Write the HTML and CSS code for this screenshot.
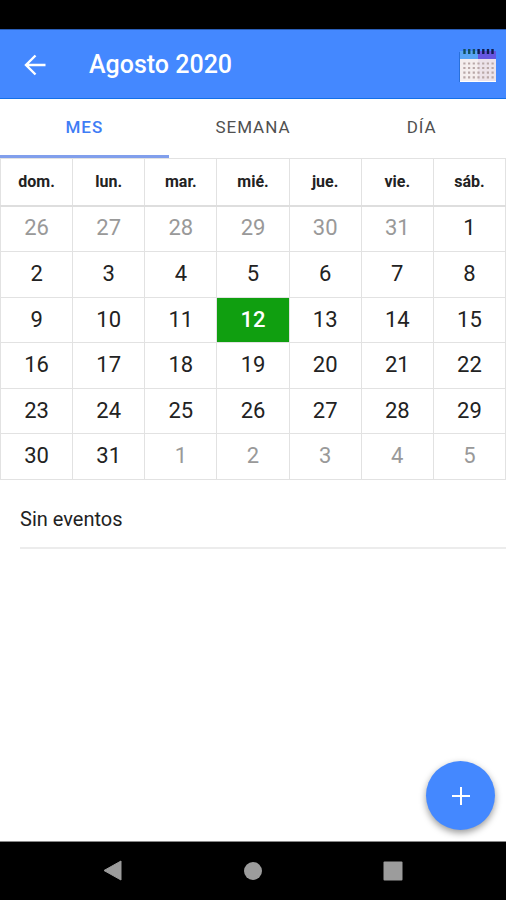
FILE: index.html
```html
<!DOCTYPE html>
<html lang="es">
<head>
<meta charset="utf-8">
<meta name="viewport" content="width=device-width, initial-scale=1">
<title>Agosto 2020</title>
<link rel="stylesheet" href="styles.css">
</head>
<body>
<div class="status-bar"></div>
<header class="app-bar">
  <button class="icon-button" type="button" aria-label="Volver">
    <svg width="22" height="22" viewBox="0 0 22 22" fill="none" stroke="currentColor" stroke-width="2.4"><path d="M21.5 11H2.5M11.500 1.500L2 11l9.500 9.500"/></svg>
  </button>
  <h1 class="title">Agosto 2020</h1>
  <button class="icon-button" type="button" aria-label="Hoy">
    <svg width="38" height="36" viewBox="0 0 38 36">
      <path fill="#2870dc" d="M0 5h2v30H0z"/>
      <path fill="#58a5f5" d="M1 4h18v9H1z"/>
      <path fill="#6656e0" d="M19 4h18v9H19z"/>
      <path fill="#f5eeee" d="M1 12h18v23H1z"/>
      <path fill="#ece2e9" d="M19 12h18v23H19z"/>
      <path fill="#fff" d="M1 34h36v1H1z"/>
      <path stroke="#12515f" stroke-width="2.400" d="M5.500 2v5M10.200 2v5M14.900 2v5"/>
      <path stroke="#101c50" stroke-width="2.400" d="M19.600 2v5M24.300 2v5M29 2v5M33.500 2v5"/>
      <path stroke="#b9a8a8" stroke-width="2.200" stroke-dasharray="2.200 2.500" d="M4.300 16.500h31M4.300 21h31M4.300 25.700h31M4.300 30.300h31"/>
    </svg>
  </button>
</header>
<nav class="tabs">
  <button class="tab tab-active" type="button">MES</button>
  <button class="tab" type="button">SEMANA</button>
  <button class="tab" type="button">DÍA</button>
</nav>
<main class="content">
  <table class="calendar">
    <thead>
      <tr><th>dom.</th><th>lun.</th><th>mar.</th><th>mié.</th><th>jue.</th><th>vie.</th><th>sáb.</th></tr>
    </thead>
    <tbody>
      <tr><td class="other">26</td><td class="other">27</td><td class="other">28</td><td class="other">29</td><td class="other">30</td><td class="other">31</td><td>1</td></tr>
      <tr><td>2</td><td>3</td><td>4</td><td>5</td><td>6</td><td>7</td><td>8</td></tr>
      <tr><td>9</td><td>10</td><td>11</td><td class="selected">12</td><td>13</td><td>14</td><td>15</td></tr>
      <tr><td>16</td><td>17</td><td>18</td><td>19</td><td>20</td><td>21</td><td>22</td></tr>
      <tr><td>23</td><td>24</td><td>25</td><td>26</td><td>27</td><td>28</td><td>29</td></tr>
      <tr><td>30</td><td>31</td><td class="other">1</td><td class="other">2</td><td class="other">3</td><td class="other">4</td><td class="other">5</td></tr>
    </tbody>
  </table>
  <p class="events">Sin eventos</p>
  <button class="fab" type="button" aria-label="Añadir evento">
    <svg width="20" height="20" viewBox="0 0 20 20" stroke="currentColor" stroke-width="2"><path d="M10 1v18M1 10h18"/></svg>
  </button>
</main>
<footer class="nav-bar">
  <button class="nav-button" type="button" aria-label="Atrás"><svg width="20" height="22" viewBox="0 0 20 22"><path fill="currentColor" stroke="currentColor" stroke-width="1" stroke-linejoin="round" d="M18 1v19L1 10.500z"/></svg></button>
  <button class="nav-button" type="button" aria-label="Inicio"><svg width="20" height="20" viewBox="0 0 20 20"><circle cx="10" cy="10" r="9" fill="currentColor"/></svg></button>
  <button class="nav-button" type="button" aria-label="Recientes"><svg width="20" height="20" viewBox="0 0 20 20"><rect x="0.500" y="0.500" width="19" height="19" rx="1" fill="currentColor"/></svg></button>
</footer>
</body>
</html>
```
FILE: styles.css
```css
* {
  box-sizing: border-box;
}

body {
  margin: 0;
  min-height: 100vh;
  display: flex;
  flex-direction: column;
  background: #fff;
  color: #222;
  font-family: Roboto, "Liberation Sans", sans-serif;
}

button {
  border: 0;
  padding: 0;
  background: none;
  color: inherit;
  font: inherit;
}

svg {
  display: block;
}

.status-bar {
  height: 29px;
  background: #000;
}

.app-bar {
  display: flex;
  align-items: center;
  height: 70px;
  padding: 2px 9px 0 24px;
  background: #4488ff;
  border-top: 1px solid #2a5eb8;
  border-bottom: 1px solid #1470e8;
  color: #fff;
}

.title {
  flex: 1;
  margin: 0 0 0 43px;
  font-size: 25px;
  font-weight: 500;
  line-height: 32px;
}

.tabs {
  display: grid;
  grid-template-columns: repeat(3, 1fr);
  height: 59px;
}

.tab {
  border-bottom: 3px solid transparent;
  color: #505050;
  font-size: 17px;
  letter-spacing: 1px;
}

.tab-active {
  border-color: #819fec;
  color: #3f7df5;
  font-weight: 500;
}

.content {
  flex: 1;
  position: relative;
}

.calendar {
  width: 100%;
  height: 322px;
  table-layout: fixed;
  border-collapse: collapse;
  border: 1px solid #dedede;
}

.calendar th,
.calendar td {
  padding: 0;
  border: 1px solid #e2e2e2;
  text-align: center;
}

.calendar th {
  height: 47px;
  border-bottom: 2px solid #dedede;
  font-size: 16px;
  font-weight: 700;
}

.calendar td {
  padding-bottom: 1px;
  font-size: 22px;
  line-height: 28px;
}

.calendar .other {
  color: #999;
}

.calendar .selected {
  background: #109f10;
  color: #fff;
  font-weight: 500;
}

.events {
  margin: 0 0 0 20px;
  padding: 25px 0 14px;
  border-bottom: 2px solid #ececec;
  font-size: 20px;
  line-height: 28px;
}

.fab {
  position: absolute;
  right: 11px;
  bottom: 11px;
  display: grid;
  place-items: center;
  width: 69px;
  height: 69px;
  border-radius: 50%;
  background: #4488ff;
  box-shadow: 0 3px 7px rgba(0, 0, 0, 0.4);
  color: #fff;
}

.nav-bar {
  display: flex;
  justify-content: center;
  align-items: center;
  gap: 120px;
  height: 59px;
  border-top: 1px solid #888;
  background: #000;
  color: #9c9c9c;
}
```
